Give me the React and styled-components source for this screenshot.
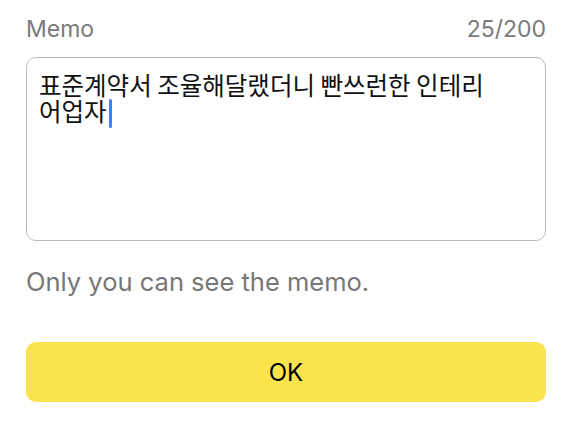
import styled, { createGlobalStyle } from "styled-components"

const GlobalStyle = createGlobalStyle`
    body {
        margin: 0;
        background: #ffffff;
        font-family: "Inter", "Noto Sans", "Noto Sans CJK KR", sans-serif;
    }
`

function App() {
    const memo = "표준계약서 조율해달랬더니 빤쓰런한 인테리어업자"

    return (
        <>
            <GlobalStyle />
            <Sheet>
                <Header>
                    <Label>Memo</Label>
                    <Label>{memo.length}/200</Label>
                </Header>
                <MemoBox>
                    {memo}
                    <Caret />
                </MemoBox>
                <Hint>Only you can see the memo.</Hint>
                <OkButton type="button">OK</OkButton>
            </Sheet>
        </>
    )
}

const Sheet = styled.div`
    width: 520px;
    margin-left: 26px;
    padding-top: 15px;
    display: flex;
    flex-direction: column;
`

const Header = styled.div`
    display: flex;
    justify-content: space-between;
    align-items: center;
    height: 28px;
`

const Label = styled.span`
    font-size: 23px;
    line-height: 28px;
    color: #7a7a7a;
`

const MemoBox = styled.div`
    box-sizing: border-box;
    margin-top: 14px;
    height: 184px;
    padding: 14px 54px 12px 12px;
    border: 1.5px solid #b9b9b9;
    border-radius: 10px;
    font-family: "Noto Sans CJK KR", "Inter", sans-serif;
    font-size: 24.5px;
    line-height: 26px;
    color: #111111;
`

const Caret = styled.span`
    display: inline-block;
    width: 3px;
    height: 29px;
    margin-left: 2px;
    vertical-align: -7px;
    border-radius: 1.5px;
    background: #3d82f7;
`

const Hint = styled.p`
    margin: 26px 0 0;
    font-size: 25.5px;
    line-height: 30px;
    color: #777777;
`

const OkButton = styled.button`
    margin-top: 45px;
    height: 60px;
    border: none;
    border-radius: 10px;
    background: #f9e44e;
    font-family: "Inter", sans-serif;
    font-size: 24px;
    color: #000000;
    cursor: pointer;
`

export default App
